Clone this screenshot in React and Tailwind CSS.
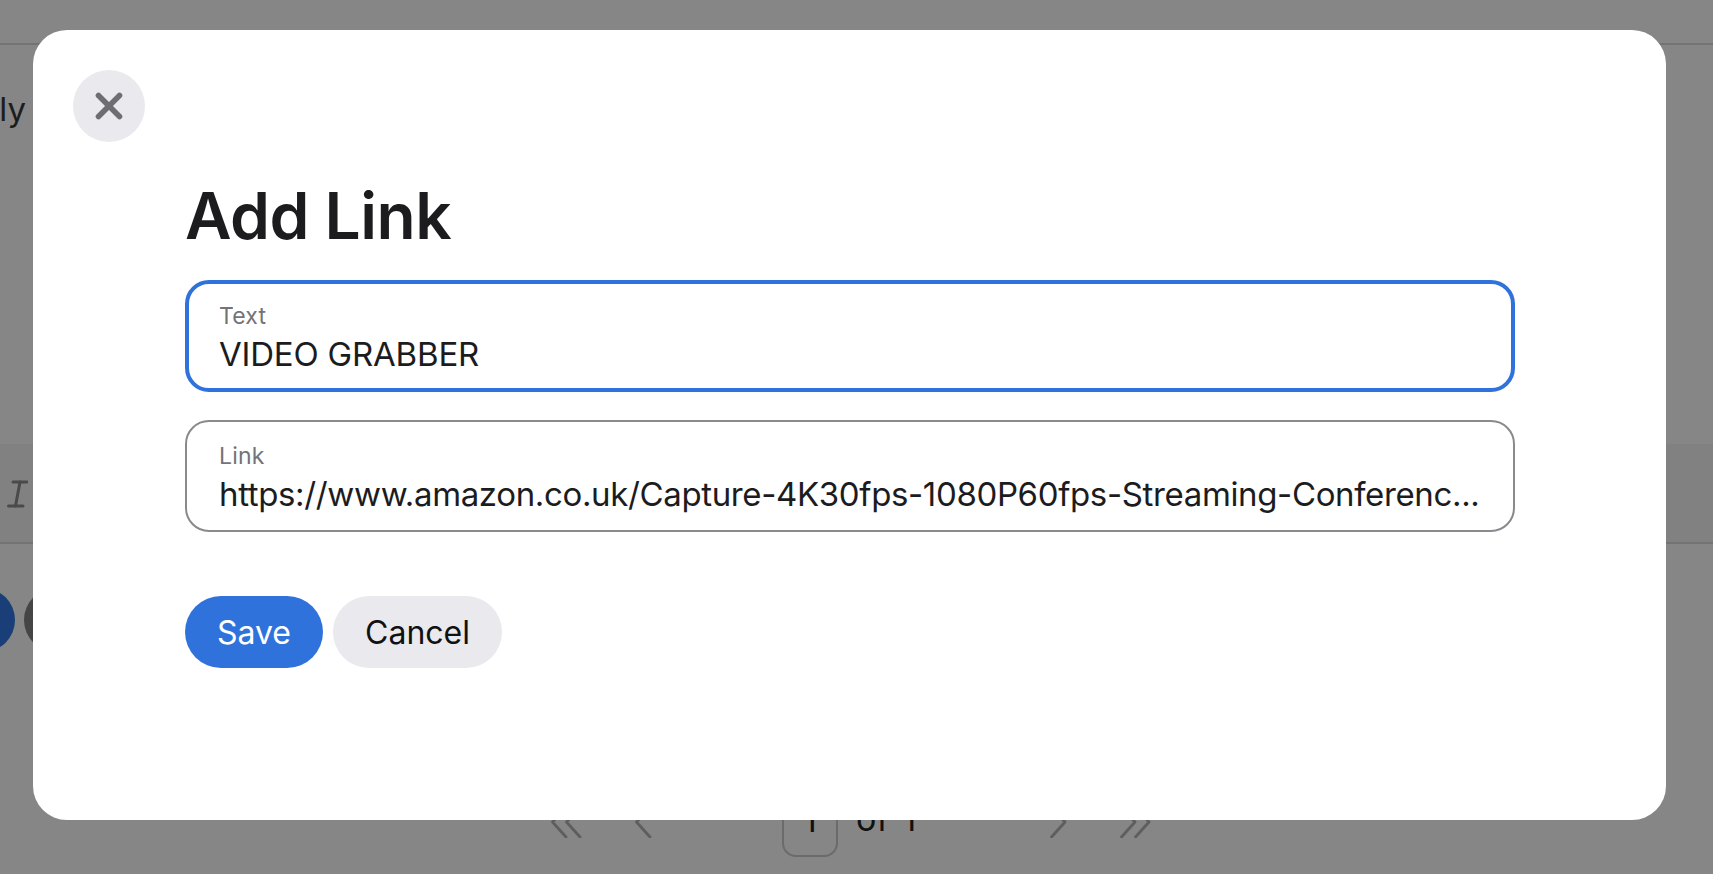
import React from 'react';

const Chevrons = ({ dir, count }) => (
  <svg width={count === 2 ? 32 : 18} height="32" viewBox={count === 2 ? '0 0 32 32' : '0 0 18 32'} fill="none" stroke="#5e5e5e" strokeWidth="2.8" strokeLinecap="round" strokeLinejoin="round">
    {dir === 'left' ? (
      <>
        <path d="M15 1 L1.5 16 L15 31" />
        {count === 2 && <path d="M29 1 L15.5 16 L29 31" />}
      </>
    ) : (
      <>
        <path d="M1.5 1 L15 16 L1.5 31" />
        {count === 2 && <path d="M15.5 1 L29 16 L15.5 31" />}
      </>
    )}
  </svg>
);

const ItalicIcon = () => (
  <svg width="21" height="28" viewBox="0 0 21 28" fill="none" stroke="#4a4a4a" strokeWidth="3" strokeLinecap="round">
    <path d="M6 2 L20 2" />
    <path d="M1.5 26 L16 26" />
    <path d="M13 2 L8.5 26" />
  </svg>
);

// Страница за затемнением
const BackgroundPage = () => (
  <div className="h-[874px] flex flex-col bg-[#868686] overflow-hidden">
    <div className="h-[45px] shrink-0 border-b-2 border-[#737373]" />
    <div className="h-[399px] shrink-0 pt-[44px]">
      <p className="text-[33px] leading-[40px] text-[#1c1c1c] w-[26px] overflow-hidden flex justify-end">ly</p>
    </div>
    <div className="h-[100px] shrink-0 bg-[#818181] border-b-2 border-[#737373] flex items-center pl-[7px] pt-[2px]">
      <ItalicIcon />
    </div>
    <div className="flex gap-[9px] mt-[44px] ml-[-49px] shrink-0">
      <div className="w-[64px] h-[64px] rounded-full bg-[#1a3f78]" />
      <div className="w-[64px] h-[64px] rounded-full bg-[#454545]" />
    </div>
    <div className="flex-1 flex items-end pb-[17px] pl-[551px]">
      <div className="w-[84px] mb-[19px]"><Chevrons dir="left" count={2} /></div>
      <div className="w-[147px] mb-[19px]"><Chevrons dir="left" count={1} /></div>
      <div className="w-[56px] h-[62px] rounded-[14px] border-2 border-[#6b6b6b] flex justify-center text-[34px] leading-[40px] pt-[3px] text-[#111]">1</div>
      <span className="ml-[18px] w-[194px] mb-[18px] text-[34px] leading-[40px] text-[#111] [word-spacing:4px]">of 1</span>
      <div className="w-[70px] mb-[19px]"><Chevrons dir="right" count={1} /></div>
      <div className="mb-[19px]"><Chevrons dir="right" count={2} /></div>
    </div>
  </div>
);

const Field = ({ label, value, focused }) => (
  <div className={`h-[112px] rounded-[24px] flex flex-col justify-center bg-white pt-[5px] ${focused ? 'border-4 border-[#2f72dc] px-[30px]' : 'border-2 border-[#8a8a8e] px-[32px]'}`}>
    <p className="text-[23px] leading-[28px] text-[#737378] tracking-[0.2px]">{label}</p>
    <p className={`mt-[3px] text-[33px] leading-[42px] text-[#1c1c1e] whitespace-nowrap ${focused ? 'tracking-[-0.2px]' : 'tracking-[-0.36px]'}`}>{value}</p>
  </div>
);

export default function App() {
  return (
    <div className="relative h-[874px] overflow-hidden font-['Inter',sans-serif]">
      <BackgroundPage />

      {/* Модальное окно */}
      <div className="absolute left-[33px] top-[30px] w-[1633px] h-[790px] bg-white rounded-[34px] px-[40px] pt-[40px]">
        <button className="w-[72px] h-[72px] rounded-full bg-[#e9e9ee] flex items-center justify-center">
          <svg width="28" height="28" viewBox="0 0 28 28" fill="none" stroke="#6d6d72" strokeWidth="5.5" strokeLinecap="round">
            <path d="M3.5 3.5 L24.5 24.5" />
            <path d="M24.5 3.5 L3.5 24.5" />
          </svg>
        </button>

        <div className="ml-[112px] w-[1330px]">
          <h1 className="mt-[36px] text-[64px] leading-[76px] font-semibold text-[#1c1c1e] tracking-[-0.5px]">Add Link</h1>
          <div className="mt-[26px] flex flex-col gap-[28px]">
            <Field label="Text" value="VIDEO GRABBER" focused />
            <Field label="Link" value="https://www.amazon.co.uk/Capture-4K30fps-1080P60fps-Streaming-Conferenc..." />
          </div>
          <div className="mt-[64px] flex gap-[10px]">
            <button className="h-[72px] w-[138px] rounded-full bg-[#2f72dc] text-white text-[32px] pt-[2px]">Save</button>
            <button className="h-[72px] w-[169px] rounded-full bg-[#e9e9ee] text-[#111] text-[32px] pt-[2px]">Cancel</button>
          </div>
        </div>
      </div>
    </div>
  );
}
